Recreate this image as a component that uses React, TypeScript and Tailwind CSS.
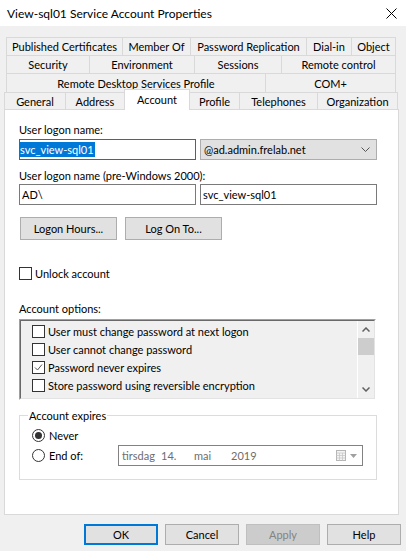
import React from "react";

function Tab({ label, w, last }: { label: string; w: string; last?: boolean }) {
  return (
    <div
      className={`${w} h-full flex items-center justify-center border-t border-l border-[#d9d9d9] bg-[#f0f0f0] whitespace-nowrap ${last ? "border-r" : ""}`}
    >
      {label}
    </div>
  );
}

function Check({ checked }: { checked?: boolean }) {
  return (
    <span className="w-[13px] h-[13px] shrink-0 border border-[#333333] bg-white flex items-center justify-center">
      {checked && (
        <svg width="9" height="9" viewBox="0 0 9 9">
          <polyline points="1,4.5 3.5,7 8,1.5" fill="none" stroke="#555555" strokeWidth="1" />
        </svg>
      )}
    </span>
  );
}

function Radio({ checked }: { checked?: boolean }) {
  return (
    <span className="w-[13px] h-[13px] shrink-0 rounded-full border border-[#333333] bg-white flex items-center justify-center">
      {checked && <span className="w-[7px] h-[7px] rounded-full bg-[#333333]" />}
    </span>
  );
}

function Btn({ label, w, cls }: { label: string; w: string; cls?: string }) {
  return (
    <div
      className={`${w} flex items-center justify-center ${cls ?? "bg-[#e1e1e1] border border-[#adadad]"}`}
    >
      {label}
    </div>
  );
}

export default function App() {
  return (
    <div className="w-[406px] h-[551px] bg-[#f0f0f0] text-[11px] leading-[15px] text-black [font-family:Lato,'Noto_Sans',sans-serif] overflow-hidden">
      {/* Title bar */}
      <div className="h-[26px] bg-white flex items-center justify-between pl-[7px] pr-[9px] text-[12px]">
        <span>View-sql01 Service Account Properties</span>
        <svg width="11" height="11" viewBox="0 0 11 11">
          <path d="M0.5,0.5 L10.5,10.5 M10.5,0.5 L0.5,10.5" stroke="#000" strokeWidth="1" />
        </svg>
      </div>

      {/* Tabs */}
      <div className="pt-[11px]">
        <div className="ml-[6px] flex h-[18px]">
          <Tab w="w-[116px]" label="Published Certificates" />
          <Tab w="w-[68px]" label="Member Of" />
          <Tab w="w-[116px]" label="Password Replication" />
          <Tab w="w-[45px]" label="Dial-in" />
          <Tab w="w-[45px]" label="Object" last />
        </div>
        <div className="ml-[6px] flex h-[18px]">
          <Tab w="w-[83px]" label="Security" />
          <Tab w="w-[105px]" label="Environment" />
          <Tab w="w-[87px]" label="Sessions" />
          <Tab w="w-[115px]" label="Remote control" last />
        </div>
        <div className="ml-[6px] flex h-[19px]">
          <Tab w="w-[259px]" label="Remote Desktop Services Profile" />
          <Tab w="w-[131px]" label="COM+" last />
        </div>
        <div className="ml-[4px] flex h-[17px]">
          <Tab w="w-[61px]" label="General" />
          <Tab w="w-[59px]" label="Address" />
          <div className="w-[66px] h-[21px] -mt-[3px] relative z-10 bg-white border-t border-l border-r border-[#d9d9d9] flex items-center justify-center pb-[2px]">
            Account
          </div>
          <div className="w-[49px] h-full flex items-center justify-center border-t border-[#d9d9d9] bg-[#f0f0f0]">
            Profile
          </div>
          <Tab w="w-[78px]" label="Telephones" />
          <Tab w="w-[81px]" label="Organization" last />
        </div>

        {/* Panel */}
        <div className="ml-[4px] w-[395px] h-[406px] border border-[#d9d9d9] bg-white pl-[14px] pt-[12px]">
          <div>User logon name:</div>
          <div className="mt-[2px] flex gap-[4px] h-[21px]">
            <div className="w-[177px] h-full border border-[#0078d7] bg-white flex items-center">
              <span className="bg-[#0078d7] text-white leading-[15px] pr-[1px]">svc_view-sql01</span>
            </div>
            <div className="w-[177px] h-full border border-[#adadad] bg-[#e1e1e1] flex items-center justify-between pl-[3px] pr-[6px]">
              <span>@ad.admin.frelab.net</span>
              <svg width="9" height="5" viewBox="0 0 9 5">
                <polyline points="0.5,0.5 4.5,4.5 8.5,0.5" fill="none" stroke="#555555" strokeWidth="1" />
              </svg>
            </div>
          </div>
          <div className="mt-[8px]">User logon name (pre-Windows 2000):</div>
          <div className="mt-[1px] flex gap-[4px] h-[21px]">
            <div className="w-[177px] h-full border border-[#7a7a7a] bg-white flex items-center pl-[2px]">AD\</div>
            <div className="w-[177px] h-full border border-[#7a7a7a] bg-white flex items-center pl-[2px]">svc_view-sql01</div>
          </div>
          <div className="mt-[12px] ml-[1px] flex gap-[8px] h-[23px]">
            <Btn w="w-[97px]" label="Logon Hours..." />
            <Btn w="w-[97px]" label="Log On To..." />
          </div>
          <div className="mt-[27px] flex items-center gap-[3px] h-[13px]">
            <Check />
            <span>Unlock account</span>
          </div>
          <div className="mt-[21px]">Account options:</div>
          <div className="mt-[3px] w-[357px] h-[81px] border border-t-[#a0a0a0] border-l-[#a0a0a0] border-r-white border-b-white">
            <div className="w-full h-full border border-t-[#696969] border-l-[#696969] border-r-[#e3e3e3] border-b-[#e3e3e3] bg-[#f0f0f0] flex">
              <div className="flex-1 pl-[11px] pt-[1px]">
                {[
                  ["User must change password at next logon", false],
                  ["User cannot change password", false],
                  ["Password never expires", true],
                  ["Store password using reversible encryption", false],
                ].map(([t, c]) => (
                  <div key={t as string} className="h-[18px] flex items-center gap-[3px]">
                    <Check checked={c as boolean} />
                    <span>{t as string}</span>
                  </div>
                ))}
              </div>
              <div className="w-[17px] h-full flex flex-col border-l border-white">
                <div className="h-[17px] flex items-center justify-center">
                  <svg width="8" height="5" viewBox="0 0 8 5">
                    <polyline points="0.5,4.5 4,1 7.5,4.5" fill="none" stroke="#606060" strokeWidth="1.5" />
                  </svg>
                </div>
                <div className="h-[17px] bg-[#cdcdcd]" />
                <div className="flex-1" />
                <div className="h-[17px] flex items-center justify-center">
                  <svg width="8" height="5" viewBox="0 0 8 5">
                    <polyline points="0.5,0.5 4,4 7.5,0.5" fill="none" stroke="#606060" strokeWidth="1.5" />
                  </svg>
                </div>
              </div>
            </div>
          </div>

          {/* Group box */}
          <div className="mt-[15px] w-[358px] h-[65px] border border-[#dcdcdc] relative pl-[12px] pt-[13px]">
            <span className="absolute -top-[8px] left-[8px] bg-white px-[1px]">Account expires</span>
            <div className="flex items-center gap-[4px] h-[13px]">
              <Radio checked />
              <span>Never</span>
            </div>
            <div className="mt-[3px] flex items-center h-[21px]">
              <div className="w-[86px] flex items-center gap-[4px]">
                <Radio />
                <span>End of:</span>
              </div>
              <div className="w-[245px] h-full border border-[#828282] bg-white flex items-center pl-[3px] pr-[5px] text-[#6d6d6d]">
                <span className="w-[39px]">tirsdag</span>
                <span className="w-[33px]">14.</span>
                <span className="w-[37px]">mai</span>
                <span className="flex-1">2019</span>
                <svg width="11" height="11" viewBox="0 0 11 11">
                  <rect x="0.5" y="0.5" width="9" height="10" fill="#f4f4f4" stroke="#b5b5b5" />
                  <path d="M0.5,3 H9.5 M0.5,5.5 H9.5 M0.5,8 H9.5 M3.5,3 V10.5 M6.5,3 V10.5" stroke="#c8c8c8" strokeWidth="0.8" />
                </svg>
                <svg width="7" height="4" viewBox="0 0 7 4" className="ml-[3px]">
                  <polygon points="0,0 7,0 3.5,4" fill="#a0a0a0" />
                </svg>
              </div>
            </div>
          </div>
        </div>

        {/* Bottom buttons */}
        <div className="mt-[9px] flex justify-end gap-[7px] pr-[5px] h-[21px]">
          <Btn w="w-[74px]" label="OK" cls="bg-[#e1e1e1] border-2 border-[#0078d7]" />
          <Btn w="w-[74px]" label="Cancel" />
          <Btn w="w-[74px]" label="Apply" cls="bg-[#cccccc] border border-[#bfbfbf] text-[#838383]" />
          <Btn w="w-[74px]" label="Help" />
        </div>
      </div>
    </div>
  );
}
